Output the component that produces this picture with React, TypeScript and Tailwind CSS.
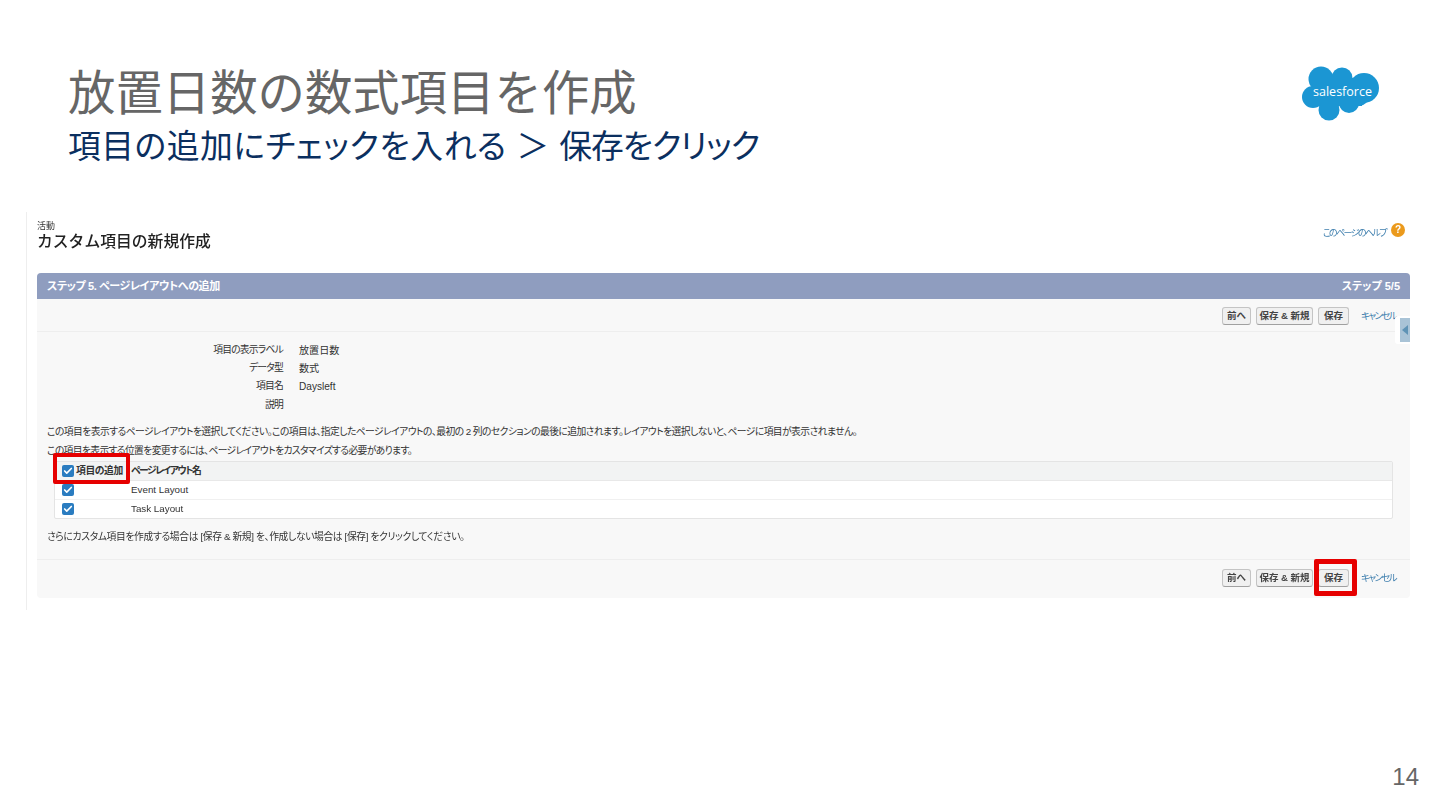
import { Check } from 'lucide-react';

const font = { jp: "font-['Liberation_Sans','Noto_Sans_CJK_JP',sans-serif]" };

function SalesforceLogo() {
  return (
    <div className="relative w-[78px] h-[55px] flex items-center justify-center">
      <svg viewBox="0 0 78 55" className="absolute inset-0 w-full h-full" fill="#1b96d3">
        <circle cx="19" cy="13" r="12.5" />
        <circle cx="40" cy="12" r="10.5" />
        <circle cx="62" cy="22" r="15" />
        <circle cx="11" cy="31" r="11" />
        <circle cx="27" cy="44" r="10.5" />
        <circle cx="47" cy="37" r="10" />
        <circle cx="57" cy="30" r="10" />
        <rect x="12" y="12" width="48" height="28" />
      </svg>
      <span className="relative text-white text-[12.5px] leading-none font-['Open_Sans',sans-serif] mt-[-3px] ml-[3px]">salesforce</span>
    </div>
  );
}

function Checkbox() {
  return (
    <span className="w-3 h-3 rounded-[2px] bg-[#2a7cc0] flex items-center justify-center flex-shrink-0">
      <Check className="w-[10px] h-[10px] text-white" strokeWidth={4} />
    </span>
  );
}

function Btn({ label, w }: { label: string; w: string }) {
  return (
    <button className={`${w} h-[18px] rounded-[3px] border border-[#c4c4c4] border-b-[#a0a0a0] bg-[#f0f0f0] text-[9.5px] font-bold text-[#444] flex items-center justify-center whitespace-nowrap`}>
      {label}
    </button>
  );
}

function Buttons({ highlight }: { highlight?: boolean }) {
  return (
    <div className="flex items-center justify-end pr-[14px]">
      <Btn label="前へ" w="w-[29px]" />
      <div className="w-[5px]" />
      <Btn label="保存 & 新規" w="w-[57px]" />
      <div className="w-[5px]" />
      <div className="relative">
        <Btn label="保存" w="w-[31px]" />
        {highlight && (
          <div className="absolute left-[-4px] top-[-10px] w-[43px] h-[37px] border-[5px] border-[#e60000] rounded-[2px]" />
        )}
      </div>
      <span className="ml-3 w-[35px] text-[9.5px] tracking-[-1.6px] text-[#3f7fae] whitespace-nowrap">キャンセル</span>
    </div>
  );
}

const fields = [
  { label: '項目の表示ラベル', value: '放置日数' },
  { label: 'データ型', value: '数式' },
  { label: '項目名', value: 'Daysleft' },
  { label: '説明', value: '' },
];

export default function App() {
  return (
    <div className={`${font.jp} w-[1440px] h-[810px] bg-white flex flex-col overflow-hidden`}>
      <div className="h-[212px] flex justify-between pl-[68px] pr-[60px] pt-[65px]">
        <div>
          <h1 className="text-[47.4px] leading-[58px] text-[#666666] whitespace-nowrap">放置日数の数式項目を作成</h1>
          <p className="text-[32.8px] leading-[46px] mt-[1px] text-[#0b2f5f] whitespace-nowrap [font-feature-settings:'palt']">
            <span className="tracking-[0.5px]">項目の追加にチェックを入れる ＞ </span>
            <span className="tracking-[-1.1px]">保存をクリック</span>
          </p>
        </div>
        <div className="mt-[1px]">
          <SalesforceLogo />
        </div>
      </div>

      <div className="ml-[26px] w-[1384px] h-[398px] border-l border-[#eeeeee] pl-[10px] blur-[0.3px] [font-feature-settings:'palt']">
        <div className="h-[61px] flex justify-between pt-[9px]">
          <div>
            <div className="text-[9px] leading-[11px] text-[#333]">活動</div>
            <div className="text-[15.8px] leading-[20px] font-medium text-[#222] whitespace-nowrap [font-feature-settings:normal]">カスタム項目の新規作成</div>
          </div>
          <div className="flex items-start pr-[5px] pt-[2px]">
            <span className="text-[9px] tracking-[-1.6px] leading-[16px] mt-[2px] text-[#3f7fae] whitespace-nowrap">このページのヘルプ</span>
            <span className="ml-[5px] w-[14px] h-[14px] rounded-full bg-[#eb9a1c] text-white text-[10px] leading-[14px] font-bold text-center">?</span>
          </div>
        </div>

        <div className="relative h-[325px] rounded-[4px] bg-[#f8f8f8] flex flex-col">
          <div className="h-[26px] rounded-t-[4px] bg-[#8f9dbf] flex items-center justify-between px-[10px] text-white text-[11px] font-bold">
            <span className="tracking-[-0.4px]">ステップ 5. ページレイアウトへの追加</span>
            <span>ステップ 5/5</span>
          </div>

          <div className="h-[33px] border-b border-[#eeeeee] pt-[8px]">
            <Buttons />
          </div>

          <div className="absolute right-0 top-[43px] w-[15px] h-[28px] bg-white rounded-l-[3px] flex items-center justify-end">
            <div className="w-[10px] h-[24px] bg-[#a9c3d6] flex items-center justify-center">
              <div className="w-0 h-0 border-y-[5px] border-y-transparent border-r-[6px] border-r-[#5f93b5]" />
            </div>
          </div>

          <div className="flex-1 px-[10px] pt-[9px] text-[9.8px] text-[#333]">
            <div className="flex flex-col">
              {fields.map((f) => (
                <div key={f.label} className="h-[18.3px] flex items-center">
                  <div className="w-[236px] text-right tracking-[-0.8px] whitespace-nowrap">{f.label}</div>
                  <div className="ml-[16px] text-[10.1px] whitespace-nowrap">{f.value}</div>
                </div>
              ))}
            </div>

            <p className="mt-[8px] leading-[19px] tracking-[-0.57px] whitespace-nowrap">この項目を表示するページレイアウトを選択してください。この項目は、指定したページレイアウトの、最初の 2 列のセクションの最後に追加されます。レイアウトを選択しないと、ページに項目が表示されません。</p>
            <p className="leading-[19px] tracking-[-0.65px] whitespace-nowrap">この項目を表示する位置を変更するには、ページレイアウトをカスタマイズする必要があります。</p>

            <div className="ml-[7px] w-[1339px] mt-[1px] border border-[#e4e4e4] rounded-[2px] bg-white">
              <div className="h-[19px] bg-[#f2f3f3] flex items-center font-bold border-b border-[#e8e8e8] pl-[7px]">
                <div className="relative w-[69px] flex items-center gap-[2px] whitespace-nowrap">
                  <Checkbox />
                  <span className="tracking-[-0.4px]">項目の追加</span>
                  <div className="absolute left-[-9px] top-[-11px] w-[77px] h-[31px] border-[4px] border-[#e60000] rounded-[2px]" />
                </div>
                <span className="tracking-[-1.5px]">ページレイアウト名</span>
              </div>
              <div className="h-[19px] flex items-center border-b border-[#f0f0f0] pl-[7px]">
                <div className="w-[69px]"><Checkbox /></div>
                <span>Event Layout</span>
              </div>
              <div className="h-[18px] flex items-center pl-[7px]">
                <div className="w-[69px]"><Checkbox /></div>
                <span>Task Layout</span>
              </div>
            </div>

            <p className="mt-[8px] leading-[19px] tracking-[-0.38px] whitespace-nowrap">さらにカスタム項目を作成する場合は [保存 & 新規] を、作成しない場合は [保存] をクリックしてください。</p>
          </div>

          <div className="h-[39px] border-t border-[#eeeeee] pt-[9px] rounded-b-[4px]">
            <Buttons highlight />
          </div>
        </div>
      </div>

      <div className="mt-auto pb-[18px] pr-[21px] text-right text-[24px] leading-[30px] text-[#666666] font-['Liberation_Sans',sans-serif]">14</div>
    </div>
  );
}
